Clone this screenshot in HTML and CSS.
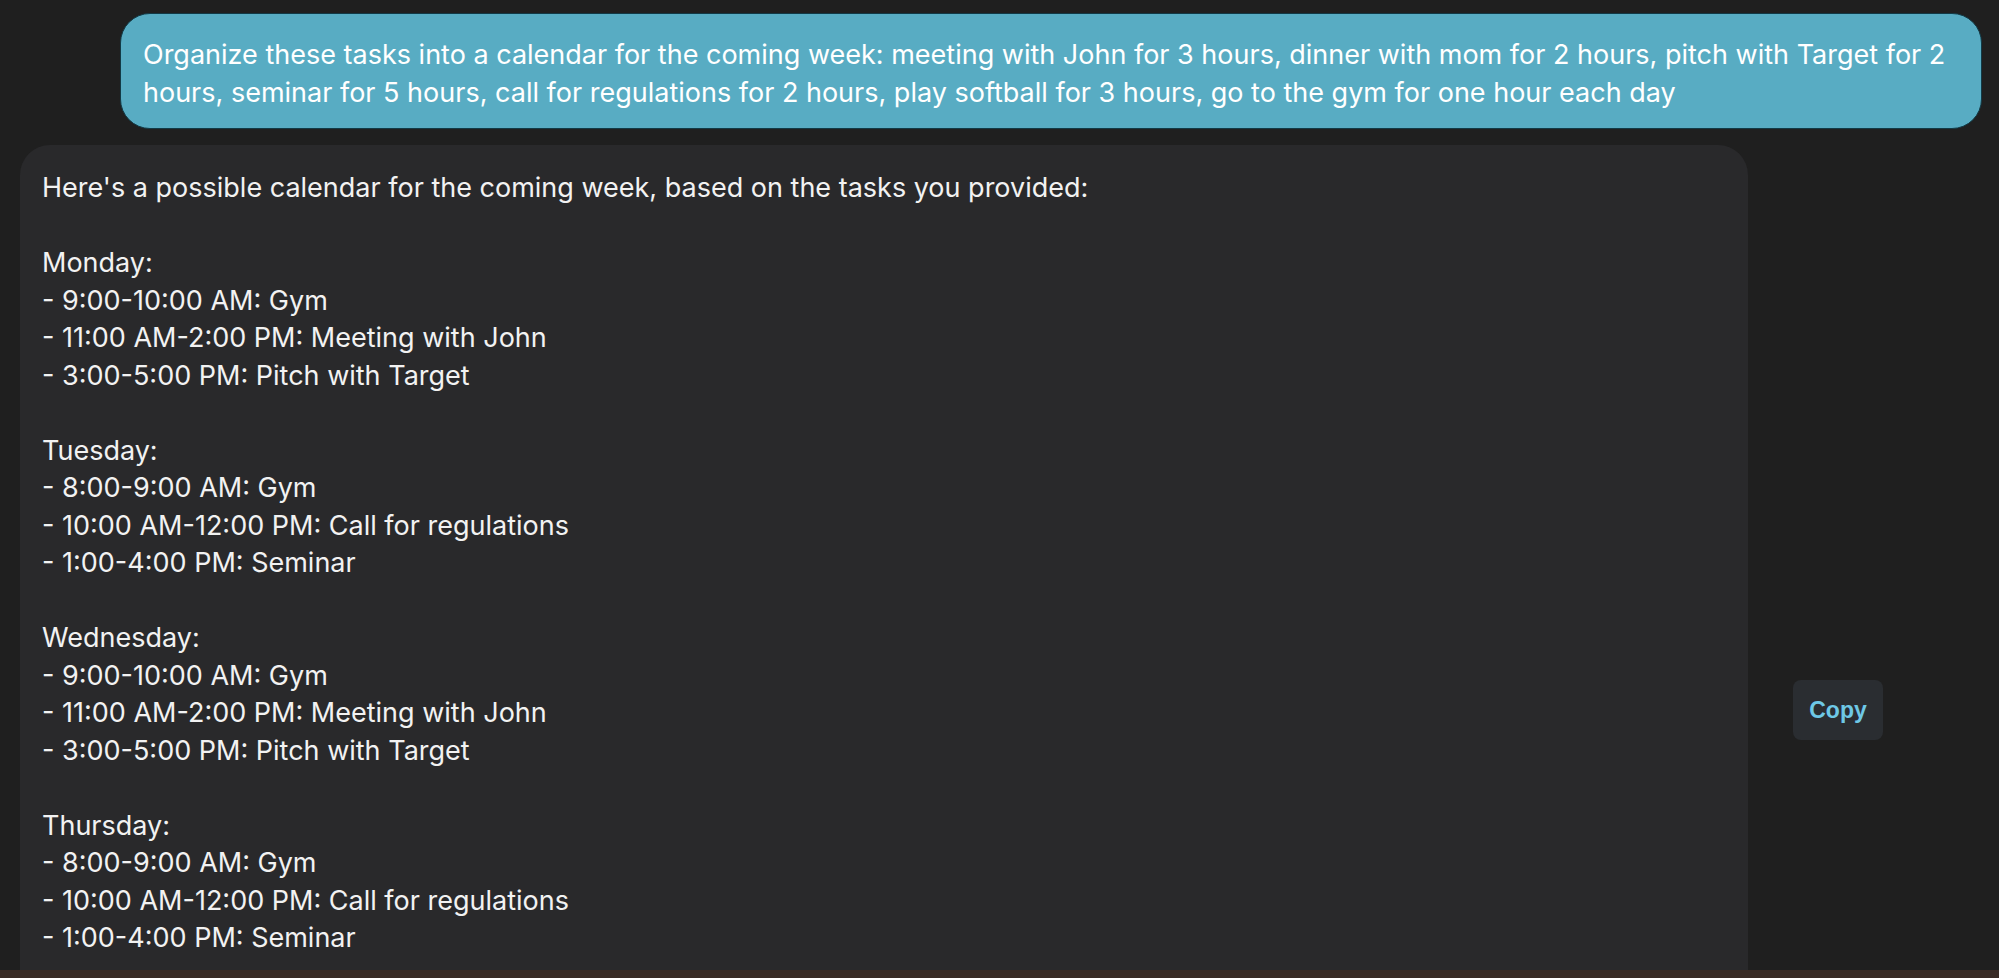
FILE: index.html
```html
<!DOCTYPE html>
<html lang="en">
<head>
<meta charset="utf-8">
<title>Chat</title>
<link rel="stylesheet" href="styles.css">
</head>
<body>
<div class="app">
  <main class="thread">
    <div class="row row-user">
      <div class="bubble bubble-user">Organize these tasks into a calendar for the coming week: meeting with John for 3 hours, dinner with mom for 2 hours, pitch with Target for 2 hours, seminar for 5 hours, call for regulations for 2 hours, play softball for 3 hours, go to the gym for one hour each day</div>
    </div>
    <div class="row row-bot">
      <div class="bubble bubble-bot">Here's a possible calendar for the coming week, based on the tasks you provided:

Monday:
- 9:00-10:00 AM: Gym
- 11:00 AM-2:00 PM: Meeting with John
- 3:00-5:00 PM: Pitch with Target

Tuesday:
- 8:00-9:00 AM: Gym
- 10:00 AM-12:00 PM: Call for regulations
- 1:00-4:00 PM: Seminar

Wednesday:
- 9:00-10:00 AM: Gym
- 11:00 AM-2:00 PM: Meeting with John
- 3:00-5:00 PM: Pitch with Target

Thursday:
- 8:00-9:00 AM: Gym
- 10:00 AM-12:00 PM: Call for regulations
- 1:00-4:00 PM: Seminar</div>
      <div class="side">
        <button class="copy" type="button">Copy</button>
      </div>
    </div>
  </main>
  <div class="bottom-bar"></div>
</div>
</body>
</html>
```

FILE: styles.css
```css
* { box-sizing: border-box; }

html, body {
  margin: 0;
  padding: 0;
  height: 100%;
  background: #1f1f1f;
}

body {
  font-family: Inter, "Liberation Sans", sans-serif;
  color: #f2f2f2;
  overflow: hidden;
}

.app {
  height: 100vh;
  display: flex;
  flex-direction: column;
}

.thread {
  flex: 1;
  overflow: hidden;
  display: flex;
  flex-direction: column;
  gap: 16px;
  padding: 13px 17px 0 20px;
}

.row {
  display: flex;
}

.row-user {
  justify-content: flex-end;
  padding-left: 100px;
}

.bubble {
  font-size: 27px;
  line-height: 37.5px;
  border-radius: 30px;
}

.bubble-user {
  width: 100%;
  background: #58acc3;
  color: #ffffff;
  border: 1px solid #123a46;
  padding: 22px 22px 17px 22px;
}

.bubble-bot {
  width: 1728px;
  min-height: 900px;
  flex: none;
  background: #29292b;
  white-space: pre-line;
  padding: 24px 22px 30px 22px;
  border-radius: 30px 30px 0 0;
}

.side {
  flex: 1;
  padding: 535px 0 0 45px;
}

.copy {
  width: 90px;
  height: 60px;
  border: none;
  border-radius: 8px;
  background: #2a2d31;
  color: #6ec8e6;
  font-family: "Liberation Sans", Arial, sans-serif;
  font-weight: 700;
  font-size: 23px;
  padding: 0;
}

.bottom-bar {
  height: 8px;
  flex: none;
  background: #382b26;
}
```
